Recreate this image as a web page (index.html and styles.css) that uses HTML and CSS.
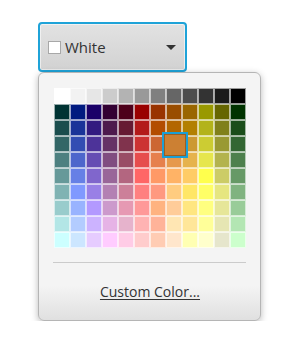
FILE: index.html
```html
<!DOCTYPE html>
<html>
<head>
<meta charset="utf-8">
<link rel="stylesheet" href="styles.css">
</head>
<body>
<div class="stage">
  <div class="picker">
    <span class="swatch"></span>
    <span class="label">White</span>
    <span class="arrow"></span>
  </div>
  <div class="popup">
    <div class="palette">
      <i style="background:#ffffff"></i><i style="background:#f2f2f2"></i><i style="background:#e6e6e6"></i><i style="background:#cccccc"></i><i style="background:#b3b3b3"></i><i style="background:#999999"></i><i style="background:#808080"></i><i style="background:#666666"></i><i style="background:#4d4d4d"></i><i style="background:#333333"></i><i style="background:#1a1a1a"></i><i style="background:#000000"></i>
      <i style="background:#003333"></i><i style="background:#001a80"></i><i style="background:#1a0068"></i><i style="background:#330033"></i><i style="background:#4d001a"></i><i style="background:#990000"></i><i style="background:#993300"></i><i style="background:#994d00"></i><i style="background:#996600"></i><i style="background:#999900"></i><i style="background:#666600"></i><i style="background:#003300"></i>
      <i style="background:#1a4d4d"></i><i style="background:#1a3399"></i><i style="background:#331a80"></i><i style="background:#4d1a4d"></i><i style="background:#661a33"></i><i style="background:#b31a1a"></i><i style="background:#b34d00"></i><i style="background:#b36600"></i><i style="background:#b38000"></i><i style="background:#b3b31a"></i><i style="background:#80801a"></i><i style="background:#1a4d1a"></i>
      <i style="background:#336666"></i><i style="background:#334db3"></i><i style="background:#4d3399"></i><i style="background:#663366"></i><i style="background:#80334d"></i><i style="background:#cc3333"></i><i style="background:#cc6633"></i><i class="selected" style="background:#cc8033"></i><i style="background:#cc9933"></i><i style="background:#cccc33"></i><i style="background:#999933"></i><i style="background:#336633"></i>
      <i style="background:#4d8080"></i><i style="background:#4d66cc"></i><i style="background:#664db3"></i><i style="background:#804d80"></i><i style="background:#994d66"></i><i style="background:#e64d4d"></i><i style="background:#e6804d"></i><i style="background:#e6994d"></i><i style="background:#e6b34d"></i><i style="background:#e6e64d"></i><i style="background:#b3b34d"></i><i style="background:#4d804d"></i>
      <i style="background:#669999"></i><i style="background:#6680e6"></i><i style="background:#8066cc"></i><i style="background:#996699"></i><i style="background:#b36680"></i><i style="background:#ff6666"></i><i style="background:#ff9966"></i><i style="background:#ffb366"></i><i style="background:#ffcc66"></i><i style="background:#ffff4d"></i><i style="background:#cccc66"></i><i style="background:#669966"></i>
      <i style="background:#80b3b3"></i><i style="background:#8099ff"></i><i style="background:#9980e6"></i><i style="background:#b380b3"></i><i style="background:#cc8099"></i><i style="background:#ff8080"></i><i style="background:#ff9980"></i><i style="background:#ffcc80"></i><i style="background:#ffe666"></i><i style="background:#ffff66"></i><i style="background:#e6e680"></i><i style="background:#80b380"></i>
      <i style="background:#99cccc"></i><i style="background:#99b3ff"></i><i style="background:#b399ff"></i><i style="background:#cc99cc"></i><i style="background:#e699b3"></i><i style="background:#ff9999"></i><i style="background:#ffb380"></i><i style="background:#ffcc99"></i><i style="background:#ffe680"></i><i style="background:#ffff80"></i><i style="background:#e6e699"></i><i style="background:#99cc99"></i>
      <i style="background:#b3e6e6"></i><i style="background:#b3ccff"></i><i style="background:#ccb3ff"></i><i style="background:#e6b3e6"></i><i style="background:#e6b3cc"></i><i style="background:#ffb3b3"></i><i style="background:#ffb399"></i><i style="background:#ffe6b3"></i><i style="background:#ffe699"></i><i style="background:#ffff99"></i><i style="background:#e6e6b3"></i><i style="background:#b3e6b3"></i>
      <i style="background:#ccffff"></i><i style="background:#cce6ff"></i><i style="background:#e6ccff"></i><i style="background:#ffccff"></i><i style="background:#ffcce6"></i><i style="background:#ffcccc"></i><i style="background:#ffccb3"></i><i style="background:#ffe6cc"></i><i style="background:#ffffb3"></i><i style="background:#ffffcc"></i><i style="background:#e6e6cc"></i><i style="background:#ccffcc"></i>
    </div>
    <div class="separator"></div>
    <div class="custom"><span class="link">Custom Color...</span></div>
  </div>
</div>
</body>
</html>
```

FILE: styles.css
```css
html, body {
  margin: 0;
  padding: 0;
  background: #ffffff;
}

body {
  font-family: "Open Sans", "Noto Sans", sans-serif;
  color: #333333;
}

.stage {
  padding: 22px 0 0 38px;
  width: 223px;
}

.picker {
  box-sizing: border-box;
  width: 149px;
  height: 50px;
  border: 2px solid #1fa3d8;
  border-radius: 4px;
  background: linear-gradient(to bottom, #e2e2e2, #d2d2d2);
  box-shadow: inset 0 0 0 1px rgba(255, 255, 255, 0.55);
  display: flex;
  align-items: center;
  padding: 0 8px 0 8px;
}

.swatch {
  box-sizing: border-box;
  width: 13px;
  height: 13px;
  background: #ffffff;
  border: 1px solid #a8a8a8;
  margin-right: 4px;
  margin-top: 1px;
}

.label {
  font-size: 15px;
  line-height: 20px;
  color: #333333;
  flex: 1;
}

.arrow {
  width: 0;
  height: 0;
  border-left: 5px solid transparent;
  border-right: 5px solid transparent;
  border-top: 5px solid #333333;
  margin-right: 1px;
  margin-top: 1px;
}

.popup {
  box-sizing: border-box;
  width: 223px;
  height: 249px;
  border: 1px solid #b5b5b5;
  border-radius: 6px;
  background: linear-gradient(to bottom, #f4f4f4 0%, #f4f4f4 86%, #e0e0e0 100%);
  box-shadow: 0 2px 7px rgba(0, 0, 0, 0.28);
  padding: 15px 14px 0 15px;
  display: flex;
  flex-direction: column;
}

.palette {
  position: relative;
  display: grid;
  grid-template-columns: repeat(12, 16px);
  grid-auto-rows: 16px;
  width: 192px;
}

.palette i {
  display: block;
  box-sizing: border-box;
  width: 16px;
  height: 16px;
  border: 1px solid rgba(255, 255, 255, 0.6);
}

.palette i.selected {
  position: relative;
}

.palette i.selected::after {
  content: "";
  position: absolute;
  left: -5px;
  top: -5px;
  width: 26px;
  height: 26px;
  box-sizing: border-box;
  background: #cc8033;
  border: 2px solid #1a9fd6;
  box-shadow: inset 0 0 0 1px rgba(0, 0, 0, 0.25);
  z-index: 2;
}

.separator {
  height: 1px;
  background: #cbcbcb;
  margin: 14px 0 0 -1px;
}

.custom {
  flex: 1;
  display: flex;
  align-items: center;
  justify-content: center;
  padding-bottom: 0;
}

.link {
  font-size: 14px;
  color: #333333;
  text-decoration: underline;
  text-underline-offset: 2px;
  text-decoration-thickness: 1px;
  margin-bottom: 1px;
}
```
